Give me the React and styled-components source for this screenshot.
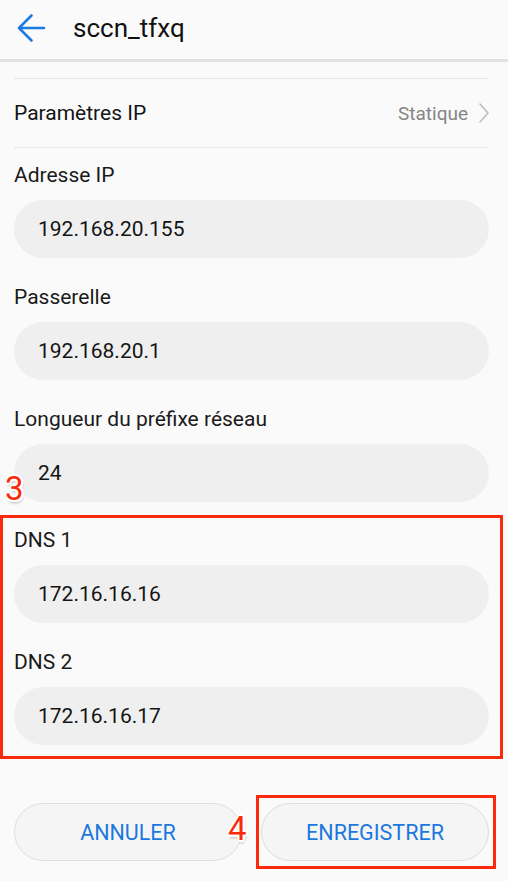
import styled, { createGlobalStyle } from 'styled-components';

const GlobalStyle = createGlobalStyle`
  body {
    margin: 0;
    background: #fafafa;
    font-family: Roboto, "Noto Sans", sans-serif;
    color: #1c1c1c;
  }
`;

const Page = styled.div`
  width: 508px;
  min-height: 881px;
  background: #fafafa;
`;

const Header = styled.header`
  height: 56px;
  padding: 0 0 3px 16px;
  display: flex;
  align-items: center;
  border-bottom: 3px solid #e2e2e2;
`;

const BackButton = styled.button`
  width: 30px;
  height: 30px;
  padding: 0;
  border: none;
  background: none;
  display: flex;
`;

const Title = styled.h1`
  margin: 0 0 0 27px;
  font-size: 26px;
  font-weight: 400;
  color: #111;
`;

const Content = styled.main`
  padding: 16px 19px 0 14px;
`;

const Divider = styled.div`
  height: 1px;
  background: #e6e6e6;
`;

const SettingRow = styled.div`
  height: 68px;
  display: flex;
  align-items: center;
  justify-content: space-between;
  font-size: 21px;
  color: #141414;
`;

const RowValue = styled.span`
  display: flex;
  align-items: center;
  gap: 11px;
  font-size: 19px;
  color: #858585;
`;

const Field = styled.div`
  margin-top: ${p => p.$gap}px;
`;

const Label = styled.div`
  height: 26px;
  line-height: 26px;
  font-size: 21px;
  color: #1a1a1a;
`;

const Input = styled.div`
  margin-top: 12px;
  height: 58px;
  border-radius: 29px;
  background: #efefef;
  padding-left: 24px;
  display: flex;
  align-items: center;
  font-size: 21px;
  color: #141414;
`;

const Highlight = styled.section`
  position: relative;
  margin: 13px -14px 0 -14px;
  padding: 9px 11px 11px 11px;
  border: 3px solid #fa2b0c;
`;

const StepBadge = styled.span`
  position: absolute;
  top: ${p => p.$top}px;
  left: ${p => p.$left}px;
  font-size: 33px;
  line-height: 33px;
  color: #fa2b0c;
  text-shadow:
    2px 0 0 #fff, -2px 0 0 #fff, 0 2px 0 #fff, 0 -2px 0 #fff,
    1.5px 1.5px 0 #fff, -1.5px 1.5px 0 #fff, 1.5px -1.5px 0 #fff, -1.5px -1.5px 0 #fff,
    1px 3px 3px rgba(0, 0, 0, 0.3);
`;

const Actions = styled.div`
  margin-top: 44px;
  display: flex;
  gap: 19px;
`;

const ActionSlot = styled.div`
  position: relative;
  flex: 1;
  display: flex;
`;

const ActionButton = styled.button`
  flex: 1;
  height: 58px;
  border-radius: 29px;
  border: 1px solid #dedede;
  background: #f5f5f5;
  font-family: Roboto, "Noto Sans", sans-serif;
  font-size: 21.5px;
  color: #1a78e0;
  text-transform: uppercase;
`;

const ButtonFrame = styled.span`
  position: absolute;
  top: -8px;
  bottom: -8px;
  left: -5px;
  right: -7px;
  border: 3px solid #fa2b0c;
  pointer-events: none;
`;

const BackArrow = () => (
  <svg width="30" height="30" viewBox="0 0 30 30" fill="none">
    <path d="M3 15 H28 M15.5 2.5 L3 15 L15.5 27.5" stroke="#1a7be0" strokeWidth="2.6" strokeLinecap="round" strokeLinejoin="round" />
  </svg>
);

const Chevron = () => (
  <svg width="10" height="20" viewBox="0 0 10 20" fill="none">
    <path d="M1 1 L9 10 L1 19" stroke="#bdbdbd" strokeWidth="1.6" strokeLinecap="round" strokeLinejoin="round" />
  </svg>
);

const fields = [
  { label: 'Adresse IP', value: '192.168.20.155' },
  { label: 'Passerelle', value: '192.168.20.1' },
  { label: 'Longueur du préfixe réseau', value: '24' },
];

const dns = [
  { label: 'DNS 1', value: '172.16.16.16' },
  { label: 'DNS 2', value: '172.16.16.17' },
];

export default function App() {
  return (
    <Page>
      <GlobalStyle />
      <Header>
        <BackButton aria-label="Retour"><BackArrow /></BackButton>
        <Title>sccn_tfxq</Title>
      </Header>
      <Content>
        <Divider />
        <SettingRow>
          <span>Paramètres IP</span>
          <RowValue>Statique <Chevron /></RowValue>
        </SettingRow>
        <Divider />
        {fields.map((f, i) => (
          <Field key={f.label} $gap={i === 0 ? 14 : 26}>
            <Label>{f.label}</Label>
            <Input>{f.value}</Input>
          </Field>
        ))}
        <Highlight>
          <StepBadge $top={-46} $left={2}>3</StepBadge>
          {dns.map((f, i) => (
            <Field key={f.label} $gap={i === 0 ? 0 : 26}>
              <Label>{f.label}</Label>
              <Input>{f.value}</Input>
            </Field>
          ))}
        </Highlight>
        <Actions>
          <ActionSlot>
            <ActionButton>Annuler</ActionButton>
          </ActionSlot>
          <ActionSlot>
            <StepBadge $top={9} $left={-33}>4</StepBadge>
            <ActionButton>Enregistrer</ActionButton>
            <ButtonFrame />
          </ActionSlot>
        </Actions>
      </Content>
    </Page>
  );
}
